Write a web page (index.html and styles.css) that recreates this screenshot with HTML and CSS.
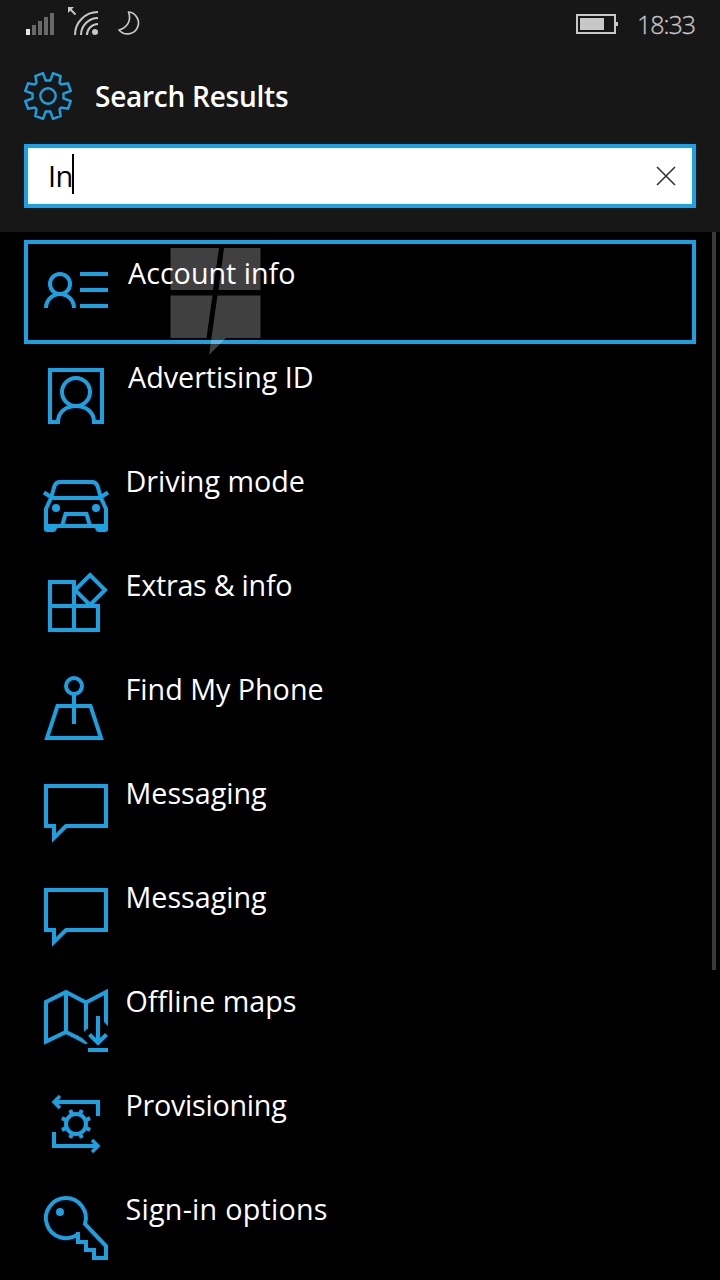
FILE: index.html
```
<!DOCTYPE html>
<html lang="en">
<head>
  <meta charset="UTF-8">
  <title>Search Results</title>
  <link rel="stylesheet" href="styles.css">
</head>
<body>

<header>
  <div class="status-bar">
    <svg class="signals" width="116" height="32" viewBox="26 5 116 32">
      <path fill="#e6e6e6" d="M26 29h4v6h-4z"/>
      <path fill="#696969" d="M32 25h4v10h-4zM38 21h4v14h-4zM44 17h4v18h-4zM50 13h4v22h-4z"/>
      <g fill="none" stroke="#c8c8c8" stroke-width="2">
        <path d="M75 35A23 23 0 0 1 98 12M81 35A17 17 0 0 1 98 18M87 35A11 11 0 0 1 98 24"/>
        <path d="M75.500 14.500L70 9"/>
        <path stroke-width="1.700" stroke-linejoin="round" d="M128.500 12A11 11 0 1 1 119 30C126.500 28 132 21 128.500 12Z"/>
      </g>
      <path fill="#c8c8c8" d="M68 7h6l-6 6z"/>
      <circle fill="#c8c8c8" cx="95" cy="32" r="3"/>
    </svg>
    <div class="status-right">
      <svg width="42" height="20" viewBox="0 0 42 20" fill="#c8c8c8">
        <path fill-rule="evenodd" d="M0 0h40v20H0zM2 2v16h36V2z"/>
        <path d="M4 4h24v12H4zM40 8h2v4h-2z"/>
      </svg>
      <span class="clock">18:33</span>
    </div>
  </div>

  <div class="title">
    <svg class="gear" width="48" height="48" viewBox="-24 -24 48 48">
      <path d="M2.300-15.500L5-22.800 12.600-20 11.500-13.200 13.200-11.500 20-12.600 22.800-5 15.500-2.300V2.300L22.800 5 20 12.600 13.200 11.500 11.500 13.200 12.600 20 5 22.800 2.300 15.500H-2.300L-5 22.800-12.600 20-11.500 13.200-13.200 11.500-20 12.600-22.800 5-15.500 2.300V-2.300L-22.800-5-20-12.600-13.200-11.500-11.500-13.200-12.600-20-5-22.800-2.300-15.500Z"/>
      <circle r="7.700"/>
    </svg>
    <h1>Search Results</h1>
  </div>

  <div class="search">
    <span class="query">In</span><span class="caret"></span>
    <svg class="clear" width="20" height="20" viewBox="0 0 20 20"><path d="M1 1L19 19M19 1L1 19"/></svg>
  </div>
</header>

<main>
  <ul class="results">
    <li class="selected">
      <svg class="icon" viewBox="40 4 72 96"><circle cx="60" cy="44" r="10"/><path d="M46 68A14 14 0 0 1 74 68M80 34H108M80 50H108M80 66H108"/></svg>
      <span class="cap-a">Account info</span>
    </li>
    <li>
      <svg class="icon" viewBox="40 4 72 96"><circle cx="76" cy="48" r="14"/><path d="M50 26H102V78H94C94 68 86 62 76 62S58 68 58 78H50Z"/></svg>
      <span class="cap-a">Advertising ID</span>
    </li>
    <li>
      <svg class="icon" viewBox="40 4 72 96">
        <path d="M51 50L54.500 38Q56 34 60 34H92Q96 34 97.500 38L101 50L106 61V78H46V61L51 50H101M44 44.500L51 49M108 44.500L101 49M62 78L65.500 66H86.500L90 78"/>
        <path class="fill" d="M44 76H57V80Q56 84 53 84H47Q44 84 44 81ZM108 76H95V80Q96 84 99 84H105Q108 84 108 81Z"/>
        <circle class="fill" cx="56" cy="60" r="4"/><circle class="fill" cx="96" cy="60" r="4"/>
      </svg>
      <span>Driving mode</span>
    </li>
    <li>
      <svg class="icon" viewBox="40 4 72 96"><path d="M74 54V30H50V78H98V54H50M74 54V78M90 23L105 38L90 53L75 38Z"/></svg>
      <span class="tight">Extras &amp; info</span>
    </li>
    <li>
      <svg class="icon" viewBox="40 4 72 96"><circle cx="74" cy="30" r="8"/><path d="M74 38V68M57.500 50H90.500L101 82H47Z"/></svg>
      <span>Find My Phone</span>
    </li>
    <li>
      <svg class="icon" viewBox="40 4 72 96"><path d="M46 26H106V66H66L54 78V66H46Z"/></svg>
      <span>Messaging</span>
    </li>
    <li>
      <svg class="icon" viewBox="40 4 72 96"><path d="M46 26H106V66H66L54 78V66H46Z"/></svg>
      <span>Messaging</span>
    </li>
    <li>
      <svg class="icon" viewBox="40 4 72 96">
        <path d="M66 24V64M86 34V61"/>
        <path d="M106 54V24L86 34.500L66 24L46 34V73.500L66 64L78 70"/>
        <path class="fill" d="M104 53L108 53V58L104 54ZM84 60H88V60L84 64ZM77 67.300L82 70 88 75.500 85 76 77 71.800Z"/>
        <path d="M98 48V75M89.500 66.500L98 75L106.500 66.500M88 82H108"/>
      </svg>
      <span>Offline maps</span>
    </li>
    <li>
      <svg class="icon" viewBox="40 4 72 96">
        <path d="M98 44V30H54M54 60V74H98"/>
        <path stroke-width="3.500" d="M60 24L54 30L60 36M92 68L98 74L92 80"/>
        <circle cx="76" cy="52" r="10"/>
        <path d="M80.200 41.800L81.800 37.900M86.200 47.800L90.100 46.200M86.200 56.200L90.100 57.800M80.200 62.200L81.800 66.100M71.800 62.200L70.200 66.100M65.800 56.200L61.900 57.800M65.800 47.800L61.900 46.200M71.800 41.800L70.200 37.900"/>
      </svg>
      <span class="tight">Provisioning</span>
    </li>
    <li>
      <svg class="icon" viewBox="40 4 72 96"><path d="M78 58A20 20 0 1 1 85 48L106 70V82H94V74H86V66H78V56"/><circle class="fill" cx="60" cy="36" r="4"/></svg>
      <span class="wide">Sign-in options</span>
    </li>
  </ul>

  <div class="scrollbar"></div>

  <svg class="watermark" width="92" height="108" viewBox="170 247 92 108">
    <path d="M170.500 248H219L213 290H170.500ZM224 248H260.500V290H218.500ZM170.500 295.500H212.500L206.500 338H170.500ZM217.500 295.500H260.500V338H226L209 355Z"/>
  </svg>
</main>

</body>
</html>
```
FILE: styles.css
```
* { box-sizing: border-box; }
body { margin: 0; height: 1280px; overflow: hidden; background: #000; color: #fff; font-family: "Open Sans", "Noto Sans", sans-serif; }

header { height: 232px; padding: 0 24px; background: #171717; }
.status-bar { display: flex; justify-content: space-between; height: 48px; padding: 5px 1px 0 2px; }
.status-right { display: flex; align-items: center; gap: 19px; height: 38px; color: #c8c8c8; }
.clock { width: 58px; font-size: 25px; font-weight: 300; line-height: 38px; letter-spacing: -1px; white-space: nowrap; -webkit-text-stroke: 0.3px #c8c8c8; }

.title { display: flex; align-items: center; gap: 23px; height: 96px; }
.title h1 { margin: 0; font-size: 28px; font-weight: 600; letter-spacing: -0.25px; }
.gear { fill: none; stroke: #1ba1e2; stroke-width: 2.4; }

.search { display: flex; align-items: center; height: 64px; padding: 0 16px 0 20px; border: 4px solid #1ba1e2; background: #fff; color: #000; }
.query { width: 24px; font-size: 29px; line-height: 40px; letter-spacing: -0.5px; white-space: nowrap; }
.caret { width: 2px; height: 40px; margin-top: -4px; background: #000; }
.clear { margin-left: auto; fill: none; stroke: #333; stroke-width: 1.6; }

main { position: relative; height: 1048px; padding: 8px 24px 0; }
.results { margin: 0; padding: 0; list-style: none; }
.results li { display: flex; gap: 12px; height: 104px; padding-left: 12px; border: 4px solid transparent; }
.results .selected { border-color: #1ba1e2; }
.results span { padding: 9px 0 0 1.5px; font-size: 28.7px; line-height: 40px; white-space: nowrap; }
.results .cap-a { padding-left: 4px; }
.results .tight { letter-spacing: -0.25px; }
.results .wide { letter-spacing: 0.25px; }

.icon { width: 72px; height: 96px; fill: none; stroke: #1ba1e2; stroke-width: 4; }
.icon .fill { fill: #1ba1e2; stroke: none; }

.scrollbar { position: absolute; top: 0; right: 4px; width: 4px; height: 738px; background: #393939; }
.watermark { position: absolute; top: 15px; left: 170px; fill: #fff; opacity: 0.25; }
```
